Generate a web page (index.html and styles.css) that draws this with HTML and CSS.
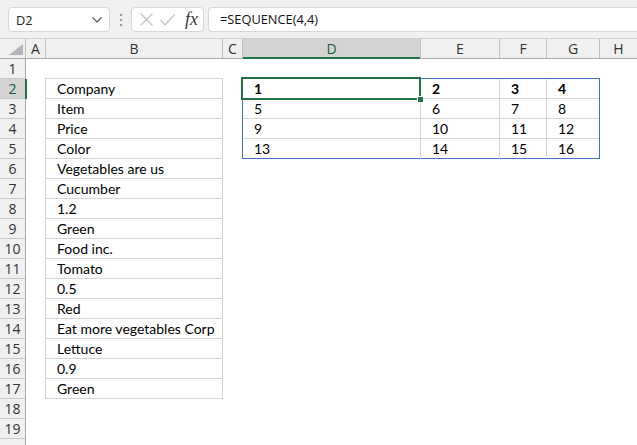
FILE: index.html
```html
<!DOCTYPE html>
<html>
<head>
<meta charset="utf-8">
<link rel="stylesheet" href="styles.css">
</head>
<body>
<div class="topbar">
  <div class="namebox">
    <span class="name">D2</span>
    <svg class="chev" width="10" height="6" viewBox="0 0 10 6"><polyline points="0.5,0.5 5,5 9.5,0.5" fill="none" stroke="#505050" stroke-width="1.1"/></svg>
  </div>
  <div class="grip"><i></i><i></i><i></i></div>
  <div class="fbtns">
    <svg width="13" height="13" viewBox="0 0 13 13"><path d="M0.5 0.5 L12.5 12.5 M12.5 0.5 L0.5 12.5" stroke="#c4c4c4" stroke-width="1.2" fill="none"/></svg>
    <svg width="15" height="12" viewBox="0 0 15 12"><polyline points="0.5,6 5,11 14.5,0.5" stroke="#c4c4c4" stroke-width="1.2" fill="none"/></svg>
    <span class="fx">fx</span>
  </div>
  <div class="finput">=SEQUENCE(4,4)</div>
</div>

<div class="colheads">
  <div class="corner"><svg width="14" height="11" viewBox="0 0 14 11"><polygon points="14,0 14,11 0,11" fill="#b5b5b5"/></svg></div>
  <div class="ch ca">A</div>
  <div class="ch cb">B</div>
  <div class="ch cc">C</div>
  <div class="ch cd sel">D</div>
  <div class="ch ce">E</div>
  <div class="ch cf">F</div>
  <div class="ch cg">G</div>
  <div class="ch chh">H</div>
</div>

<div class="sheetbody">
  <div class="rowheads">
    <div class="rh">1</div>
    <div class="rh sel">2</div>
    <div class="rh">3</div>
    <div class="rh">4</div>
    <div class="rh">5</div>
    <div class="rh">6</div>
    <div class="rh">7</div>
    <div class="rh">8</div>
    <div class="rh">9</div>
    <div class="rh">10</div>
    <div class="rh">11</div>
    <div class="rh">12</div>
    <div class="rh">13</div>
    <div class="rh">14</div>
    <div class="rh">15</div>
    <div class="rh">16</div>
    <div class="rh">17</div>
    <div class="rh">18</div>
    <div class="rh">19</div>
    <div class="rh"></div>
  </div>
  <div class="cells">
    <div class="blist">
      <div class="bc">Company</div>
      <div class="bc">Item</div>
      <div class="bc">Price</div>
      <div class="bc">Color</div>
      <div class="bc">Vegetables are us</div>
      <div class="bc">Cucumber</div>
      <div class="bc">1.2</div>
      <div class="bc">Green</div>
      <div class="bc">Food inc.</div>
      <div class="bc">Tomato</div>
      <div class="bc">0.5</div>
      <div class="bc">Red</div>
      <div class="bc">Eat more vegetables Corp</div>
      <div class="bc">Lettuce</div>
      <div class="bc">0.9</div>
      <div class="bc">Green</div>
    </div>
    <div class="spill">
      <div class="tc hd active">1<span class="selbox"><span class="handle"></span></span></div>
      <div class="tc hd">2</div>
      <div class="tc hd">3</div>
      <div class="tc hd last">4</div>
      <div class="tc">5</div>
      <div class="tc">6</div>
      <div class="tc">7</div>
      <div class="tc last">8</div>
      <div class="tc">9</div>
      <div class="tc">10</div>
      <div class="tc">11</div>
      <div class="tc last">12</div>
      <div class="tc bot">13</div>
      <div class="tc bot">14</div>
      <div class="tc bot">15</div>
      <div class="tc bot last">16</div>
    </div>
  </div>
</div>
</body>
</html>
```

FILE: styles.css
```css
* { box-sizing: border-box; }
html, body { margin: 0; padding: 0; }
body {
  width: 637px;
  height: 445px;
  overflow: hidden;
  background: #ffffff;
  font-family: "Open Sans", "Noto Sans", sans-serif;
  color: #000;
}

/* formula bar */
.topbar {
  height: 38px;
  background: #f0f0f0;
  display: flex;
  align-items: flex-start;
  padding: 7px 0 0 8px;
}
.namebox {
  flex: none;
  width: 102px;
  height: 25px;
  background: #fff;
  border: 1px solid #d6d6d6;
  border-radius: 4px;
  display: flex;
  align-items: center;
  justify-content: space-between;
  padding: 0 7px 0 7px;
  font-size: 12.8px;
  color: #222;
}
.chev { margin-top: 1px; }
.grip {
  flex: none;
  width: 21px;
  height: 25px;
  display: flex;
  flex-direction: column;
  align-items: center;
  justify-content: center;
  gap: 3px;
}
.grip i {
  display: block;
  width: 2px;
  height: 2px;
  background: #9a9a9a;
}
.fbtns {
  flex: none;
  width: 73px;
  height: 25px;
  background: #fff;
  border: 1px solid #d6d6d6;
  border-radius: 4px;
  display: flex;
  align-items: center;
  padding: 0 0 0 8px;
  gap: 7px;
}
.fx {
  font-family: "Liberation Serif", "DejaVu Serif", serif;
  font-style: italic;
  font-size: 18px;
  color: #3a3a3a;
  margin-left: 3px;
  line-height: 1;
  margin-top: -2px;
}
.finput {
  flex: 1;
  margin-left: 4px;
  height: 25px;
  background: #fff;
  border: 1px solid #d6d6d6;
  border-right: none;
  border-radius: 4px 0 0 4px;
  padding-left: 11px;
  font-size: 12.8px;
  line-height: 23px;
  color: #111;
}

/* column headers */
.colheads {
  display: flex;
  height: 21px;
  background: #f0f0f0;
  border-top: 1px solid #d0d0d0;
  border-bottom: 1px solid #ababab;
}
.corner {
  width: 26px;
  flex: none;
  border-right: 1px solid #c0c0c0;
  display: flex;
  align-items: flex-end;
  justify-content: flex-end;
  padding: 0 2px 3px 0;
}
.ch {
  flex: none;
  border-right: 1px solid #c0c0c0;
  text-align: center;
  font-size: 14px;
  line-height: 19px;
  color: #333;
}
.ca { width: 20px; }
.cb { width: 177px; }
.cc { width: 20px; }
.cd { width: 178px; }
.ce { width: 79px; }
.cf { width: 47px; }
.cg { width: 53px; }
.chh { flex: 1; border-right: none; }
.ch.sel {
  background: #d3d3d3;
  color: #185c37;
  box-shadow: inset 0 -2px 0 #217346;
  margin-bottom: -1px;
}

/* sheet */
.sheetbody {
  display: flex;
}
.rowheads {
  width: 26px;
  flex: none;
  background: #f0f0f0;
  border-right: 1px solid #ababab;
}
.rh {
  height: 20px;
  border-bottom: 1px solid #c8c8c8;
  text-align: center;
  font-size: 14px;
  line-height: 19px;
  color: #333;
}
.rh.sel {
  background: #d3d3d3;
  color: #185c37;
  box-shadow: 2px 0 0 #217346;
  position: relative;
  z-index: 1;
}

.cells {
  flex: 1;
  display: grid;
  grid-template-columns: 20px 177px 20px 178px 79px 47px 53px 1fr;
  grid-template-rows: repeat(20, 20px);
  font-family: "Lato", "Open Sans", sans-serif;
  font-size: 14px;
}
.blist {
  grid-column: 2;
  grid-row: 2 / span 16;
  margin: -1px 0 0 -1px;
  border-left: 1px solid #d4d4d4;
  border-top: 1px solid #d4d4d4;
  display: flex;
  flex-direction: column;
}
.bc {
  height: 20px;
  border-right: 1px solid #d4d4d4;
  border-bottom: 1px solid #d4d4d4;
  padding-left: 11px;
  line-height: 20px;
  white-space: nowrap;
}
.spill {
  grid-column: 4 / span 4;
  grid-row: 2 / span 4;
  margin: -1px 0 0 -1px;
  border: 1px solid #4472c4;
  display: grid;
  grid-template-columns: 178px 79px 47px 1fr;
  grid-template-rows: 20px 20px 20px 1fr;
}
.tc {
  border-right: 1px solid #d4d4d4;
  border-bottom: 1px solid #d4d4d4;
  padding-left: 11px;
  line-height: 20px;
  white-space: nowrap;
}
.tc.last { border-right: none; }
.tc.bot { border-bottom: none; }
.tc.hd { font-weight: bold; }
.tc.active { position: relative; }
.selbox {
  position: absolute;
  left: -2px;
  top: -2px;
  width: 180px;
  height: 23px;
  border: 2px solid #217346;
}
.handle {
  position: absolute;
  right: -4px;
  bottom: -4px;
  width: 6px;
  height: 6px;
  background: #217346;
  border-left: 1px solid #fff;
  border-top: 1px solid #fff;
}
```
